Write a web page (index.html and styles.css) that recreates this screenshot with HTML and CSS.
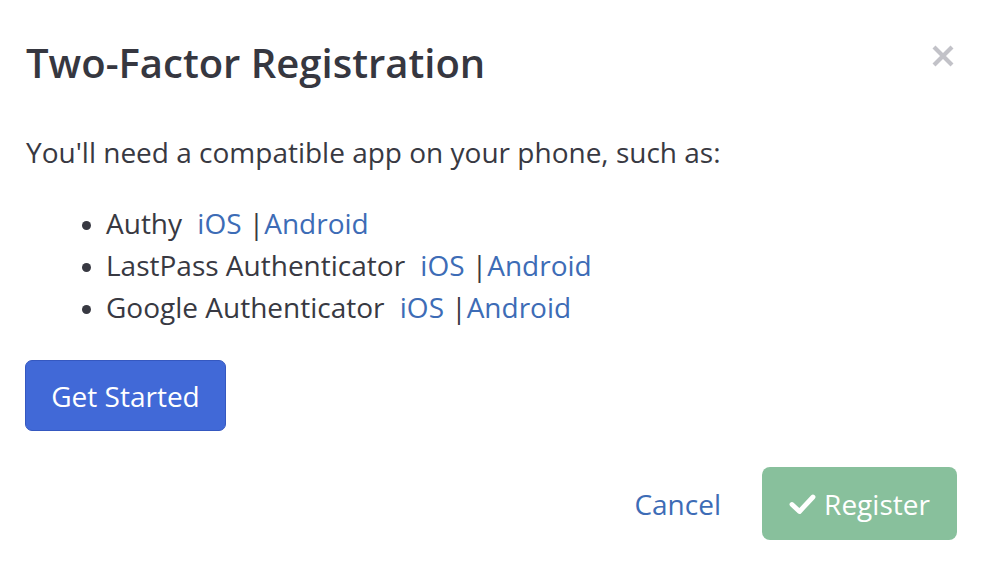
FILE: index.html
```html
<!DOCTYPE html>
<html lang="en">
<head>
<meta charset="utf-8">
<title>Two-Factor Registration</title>
<link rel="stylesheet" href="styles.css">
</head>
<body>
<div class="modal">
  <div class="modal-header">
    <h1 class="modal-title">Two-Factor Registration</h1>
    <button class="close" aria-label="Close">
      <svg width="22" height="22" viewBox="0 0 22 22"><path d="M2 2 L20 20 M20 2 L2 20" stroke="#c2c2c8" stroke-width="4.2" stroke-linecap="butt"/></svg>
    </button>
  </div>
  <div class="modal-body">
    <p class="intro">You'll need a compatible app on your phone, such as:</p>
    <ul class="apps">
      <li>Authy <a href="#">iOS</a> |<a href="#">Android</a></li>
      <li>LastPass Authenticator <a href="#">iOS</a> |<a href="#">Android</a></li>
      <li>Google Authenticator <a href="#">iOS</a> |<a href="#">Android</a></li>
    </ul>
    <button class="btn btn-primary">Get Started</button>
  </div>
  <div class="modal-footer">
    <a href="#" class="cancel">Cancel</a>
    <button class="btn btn-success">
      <svg class="check" width="27" height="22" viewBox="0 0 27 22"><path d="M3 11.5 L10.5 18.5 L24 4" fill="none" stroke="#fff" stroke-width="4.8" stroke-linecap="round" stroke-linejoin="round"/></svg>
      Register
    </button>
  </div>
</div>
</body>
</html>
```

FILE: styles.css
```css
* { box-sizing: border-box; }
html, body { margin: 0; padding: 0; background: #fff; }
body {
  font-family: "Open Sans", "Liberation Sans", sans-serif;
  color: #383942;
}
.modal {
  width: 984px;
  height: 562px;
  padding: 0 27px 0 26px;
}
.modal-header {
  display: flex;
  justify-content: space-between;
  align-items: flex-start;
  padding-top: 38px;
}
.modal-title {
  margin: 0;
  font-size: 40px;
  font-weight: 600;
  line-height: 50px;
  color: #363740;
}
.close {
  border: 0;
  background: none;
  padding: 0;
  margin: 7px 3px 0 0;
  width: 22px;
  height: 22px;
  cursor: pointer;
}
.close svg { display: block; }
.modal-body { padding-top: 43px; }
.intro {
  margin: 0;
  font-size: 28px;
  line-height: 42px;
}
.apps {
  margin: 29px 0 0 0;
  padding-left: 80px;
  font-size: 28px;
  line-height: 42px;
}
.apps li::marker { font-size: 24px; }
.apps a { color: #3d6cb6; text-decoration: none; }
.apps a:first-child { margin-left: 8px; }
.btn {
  font-family: inherit;
  border-radius: 7px;
  cursor: pointer;
  font-size: 28px;
}
.btn-primary {
  margin: 32px 0 0 -1px;
  width: 201px;
  height: 71px;
  background: #4169d7;
  border: 1.5px solid #3558c0;
  color: #fff;
  padding: 0;
}
.modal-footer {
  display: flex;
  justify-content: flex-end;
  align-items: center;
  gap: 41px;
  margin-top: 36px;
}
.cancel {
  color: #3d6cb6;
  text-decoration: none;
  font-size: 28px;
}
.btn-success {
  width: 195px;
  height: 73px;
  background: #88c09c;
  border: 0;
  color: #fff;
  display: inline-flex;
  align-items: center;
  justify-content: center;
  gap: 8px;
  border-radius: 8px;
  padding: 0;
}
.check { display: block; }
```
